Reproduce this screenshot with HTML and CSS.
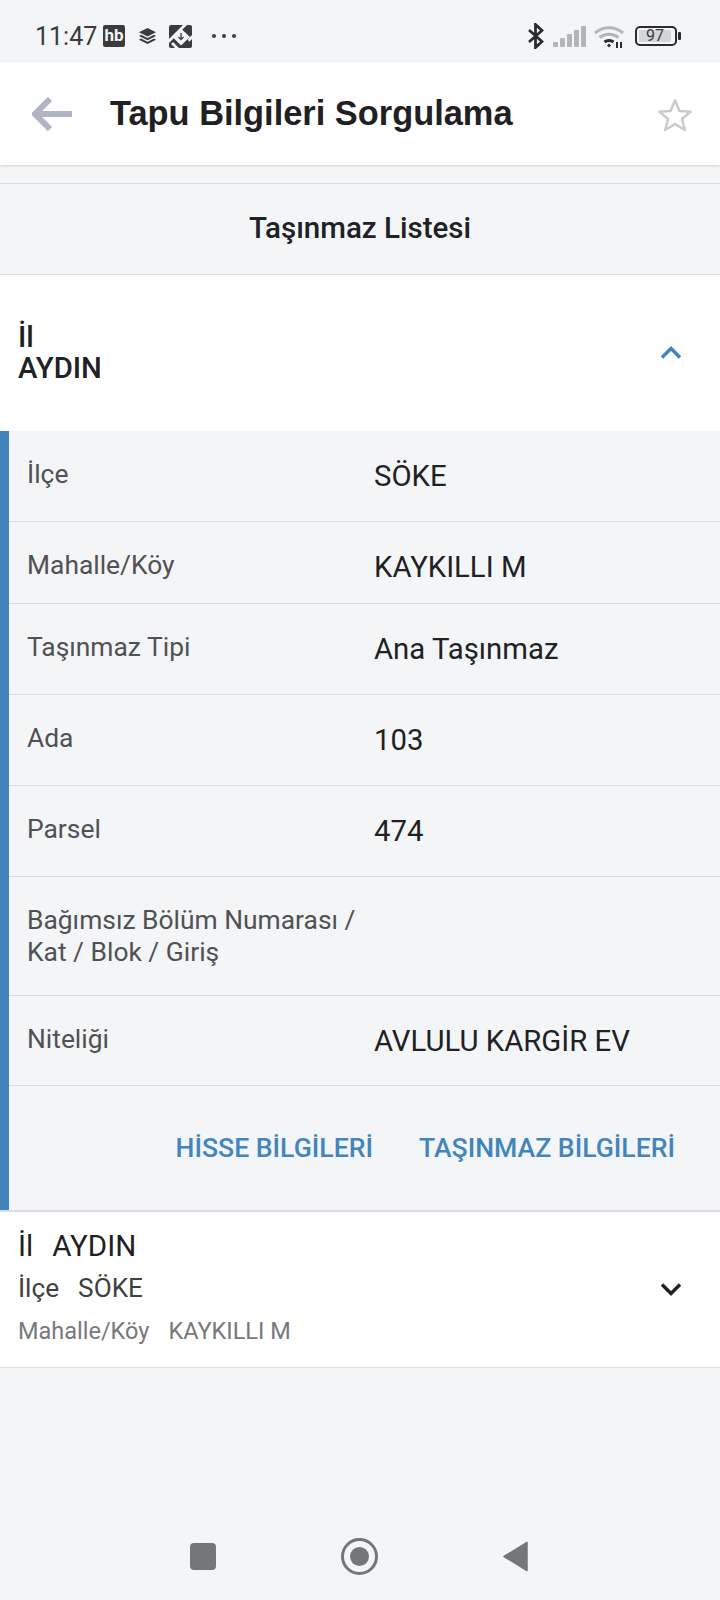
FILE: index.html
```html
<!DOCTYPE html>
<html lang="tr">
<head>
  <meta charset="UTF-8" />
  <meta name="viewport" content="width=device-width, initial-scale=1.0" />
  <title>Tapu Bilgileri Sorgulama</title>
  <link rel="stylesheet" href="styles.css">
</head>
<body>
  <div class="status-bar">
    <span class="time">11:47</span>
    <span class="hb">hb</span>
    <svg class="ic-layers" viewBox="0 0 17 16"><path d="M8.500 0 17 4.200 8.500 8.400 0 4.200z" fill="#3a3b3d"/><path d="M2 6.800 8.500 10 15 6.800 17 8 8.500 12.200 0 8z" fill="#3a3b3d"/><path d="M2 10.600 8.500 13.800 15 10.600 17 11.800 8.500 16 0 11.800z" fill="#3a3b3d"/></svg>
    <svg class="ic-app" viewBox="0 0 23 23"><rect width="23" height="23" rx="2" fill="#3a3b3d"/><path d="M0 14 14 0H18L0 18z" fill="#f4f5f7"/><path d="M12 3.500 21 12 12 20.500 3.500 12z" fill="#f4f5f7"/><path d="M4 17 10 23H6L2 19z" fill="#f4f5f7"/><path d="M19 14 23 10V14L20 17z" fill="#f4f5f7"/><path d="M12 8v6.500M9.500 12l2.500 2.500 2.500-2.500" stroke="#3a3b3d" stroke-width="1.300" fill="none"/></svg>
    <span class="dots"><i></i><i></i><i></i></span>
    <span class="status-right">
      <svg class="ic-bt" viewBox="0 0 16 26"><path d="M1 7 14 18.500 7.500 24.500V1.500L14 7.500 1 19" fill="none" stroke="#2b2c2e" stroke-width="2.800"/></svg>
      <svg class="ic-signal" viewBox="0 0 33 21"><rect x="0" y="16" width="5" height="5" rx="1" fill="#b4b5b7"/><rect x="7" y="12" width="5" height="9" rx="1" fill="#b4b5b7"/><rect x="14" y="8" width="5" height="13" rx="1" fill="#b4b5b7"/><rect x="21" y="4" width="5" height="17" rx="1" fill="#b4b5b7"/><rect x="28" y="0" width="5" height="21" rx="1" fill="#b4b5b7"/></svg>
      <svg class="ic-wifi" viewBox="0 0 30 23"><path d="M1 8C9 1 21 1 29 8" fill="none" stroke="#b4b5b7" stroke-width="3"/><path d="M5.500 12.500C11 8 19 8 24.500 12.500" fill="none" stroke="#b4b5b7" stroke-width="3"/><path d="M10.500 17C13 15 17 15 19.500 17" fill="none" stroke="#2b2c2e" stroke-width="3"/><path d="M13 20.500 15 18.500 17 20.500 15 22.500z" fill="#2b2c2e"/><path d="M23 17v6M27 17v6" stroke="#2b2c2e" stroke-width="2"/></svg>
      <span class="battery"><span class="battery-fill">97</span></span>
    </span>
  </div>

  <header class="app-bar">
    <svg class="ic-back" viewBox="0 0 40 34"><path d="M18 2 3 17 18 32M3 17H40" fill="none" stroke="#b1b4c3" stroke-width="6"/></svg>
    <h1>Tapu Bilgileri Sorgulama</h1>
    <svg class="ic-star" viewBox="0 0 36 34"><path d="M18 2.500 22.500 13 33.500 13.800 25 21 27.800 32 18 26 8.200 32 11 21 2.500 13.800 13.500 13z" fill="none" stroke="#c9cacd" stroke-width="2.500" stroke-linejoin="round"/></svg>
  </header>

  <div class="list-title">Taşınmaz Listesi</div>

  <section class="panel-head">
    <div class="panel-name">
      <div>İl</div>
      <div>AYDIN</div>
    </div>
    <svg class="ic-chevron" viewBox="0 0 22 13"><path d="M2 11.500 11 2.500 20 11.500" fill="none" stroke="#4285bd" stroke-width="3.400"/></svg>
  </section>

  <section class="detail">
    <div class="row"><span class="label">İlçe</span><span class="value">SÖKE</span></div>
    <div class="row row-short"><span class="label">Mahalle/Köy</span><span class="value">KAYKILLI M</span></div>
    <div class="row"><span class="label">Taşınmaz Tipi</span><span class="value">Ana Taşınmaz</span></div>
    <div class="row"><span class="label">Ada</span><span class="value">103</span></div>
    <div class="row"><span class="label">Parsel</span><span class="value">474</span></div>
    <div class="row row-tall"><span class="label">Bağımsız Bölüm Numarası / Kat / Blok / Giriş</span><span class="value"></span></div>
    <div class="row row-last"><span class="label">Niteliği</span><span class="value">AVLULU KARGİR EV</span></div>
    <div class="actions">
      <a>HİSSE BİLGİLERİ</a>
      <a>TAŞINMAZ BİLGİLERİ</a>
    </div>
  </section>

  <section class="item">
    <div class="item-text">
      <div class="item-il">İl<span>AYDIN</span></div>
      <div class="item-ilce">İlçe<span>SÖKE</span></div>
      <div class="item-mah">Mahalle/Köy<span>KAYKILLI M</span></div>
    </div>
    <svg class="ic-chevron" viewBox="0 0 22 13"><path d="M2 1.500 11 10.500 20 1.500" fill="none" stroke="#202124" stroke-width="3.400"/></svg>
  </section>

  <nav class="nav-bar">
    <span class="nav-square"></span>
    <span class="nav-circle"><i></i></span>
    <svg class="nav-back" viewBox="0 0 25 31"><path d="M24 1.500V29.500L1 15.500z" fill="#757678" stroke="#757678" stroke-width="1.500" stroke-linejoin="round"/></svg>
  </nav>
</body>
</html>
```

FILE: styles.css
```css
* { margin: 0; padding: 0; box-sizing: border-box; }
html { font-size: 16px; }
body {
  width: 720px;
  height: 1600px;
  display: flex;
  flex-direction: column;
  font-family: 'Roboto', sans-serif;
  color: #202124;
  background: #f4f5f7;
  overflow: hidden;
}
svg { display: block; flex: none; }

/* Status bar */
.status-bar {
  height: 62px;
  display: flex;
  align-items: center;
  padding: 10px 43px 0 35px;
  color: #3a3b3d;
}
.time { font-size: 25px; width: 68px; }
.hb {
  width: 22px;
  height: 22px;
  border-radius: 2px;
  background: #3a3b3d;
  color: #f4f5f7;
  font-size: 17px;
  font-weight: 700;
  line-height: 21px;
  text-align: center;
}
.ic-layers { width: 17px; height: 16px; margin-left: 14px; }
.ic-app { width: 23px; height: 23px; margin-left: 13px; }
.dots { display: flex; gap: 6px; margin-left: 20px; }
.dots i { width: 4px; height: 4px; border-radius: 50%; background: #3a3b3d; }
.status-right { display: flex; align-items: center; margin-left: auto; }
.ic-bt { width: 16px; height: 26px; }
.ic-signal { width: 33px; height: 21px; margin-left: 9px; }
.ic-wifi { width: 30px; height: 23px; margin-left: 8px; }
.battery {
  position: relative;
  width: 42px;
  height: 20px;
  margin-left: 11px;
  border: 2px solid #2b2c2e;
  border-radius: 5px;
  padding: 2px 4px 2px 2px;
}
.battery::after {
  content: '';
  position: absolute;
  right: -6px;
  top: 4px;
  width: 3px;
  height: 8px;
  border-radius: 1px;
  background: #2b2c2e;
}
.battery-fill {
  display: block;
  height: 12px;
  background: #d4d5d7;
  border-radius: 1px;
  font-size: 16px;
  line-height: 12px;
  text-align: center;
  color: #3a3b3d;
}

/* App bar */
.app-bar {
  height: 103px;
  display: flex;
  align-items: center;
  padding: 0 27px 0 32px;
  background: #fff;
  box-shadow: 0 1px 3px rgba(0,0,0,0.14);
}
.ic-back { width: 40px; height: 34px; margin-top: 1px; }
.app-bar h1 {
  margin-left: 38px;
  font-family: 'Liberation Sans', sans-serif;
  font-size: 34.4px;
  font-weight: 700;
  color: #1f2022;
}
.ic-star { width: 36px; height: 34px; margin-left: auto; margin-top: 2px; }

/* List title */
.list-title {
  margin-top: 18px;
  height: 92px;
  display: flex;
  align-items: center;
  justify-content: center;
  padding-bottom: 2px;
  border-top: 1px solid #dcdde0;
  border-bottom: 1px solid #dcdde0;
  font-size: 29.5px;
  font-weight: 500;
}

/* Open panel */
.panel-head {
  height: 156px;
  display: flex;
  align-items: center;
  justify-content: space-between;
  padding: 0 38px 0 18px;
  background: #fff;
}
.panel-name { font-size: 29.3px; font-weight: 500; line-height: 31px; padding-bottom: 1px; }
.ic-chevron { width: 22px; height: 13px; }
.panel-head .ic-chevron { margin-bottom: 2px; }
.detail { border-left: 9px solid #4285bd; }
.row {
  display: flex;
  height: 91px;
  padding: 27px 0 0 18px;
  border-bottom: 1px solid #dcdde0;
}
.row-short { height: 82px; }
.row-tall { height: 119px; }
.row-last { height: 90px; }
.label {
  width: 347px;
  flex: none;
  padding-right: 10px;
  font-size: 26.4px;
  line-height: 32px;
  color: #505154;
}
.value { font-size: 29.3px; line-height: 36px; color: #202124; }
.actions {
  height: 124px;
  display: flex;
  align-items: center;
  justify-content: flex-end;
  gap: 46px;
  padding: 0 45px 2px 0;
}
.actions a { font-size: 26.6px; font-weight: 500; color: #4285bd; }

/* Collapsed item */
.item {
  height: 158px;
  display: flex;
  align-items: center;
  justify-content: space-between;
  padding: 0 38px 0 18px;
  background: #fff;
  border-top: 2px solid #dcdde0;
  border-bottom: 1px solid #dcdde0;
}
.item-text span { margin-left: 19px; }
.item-il { font-size: 29.5px; line-height: 36px; color: #202124; }
.item-ilce { font-size: 26.2px; line-height: 48px; color: #3f4043; }
.item-mah { font-size: 23.5px; line-height: 39px; color: #77787b; }

/* System navigation */
.nav-bar {
  margin-top: auto;
  height: 88px;
  display: flex;
  align-items: center;
  padding: 0 192px 0 190px;
  justify-content: space-between;
}
.nav-square { width: 26px; height: 27px; border-radius: 4px; background: #757678; }
.nav-circle {
  width: 37px;
  height: 37px;
  border: 3px solid #757678;
  border-radius: 50%;
  display: flex;
  align-items: center;
  justify-content: center;
}
.nav-circle i { width: 19px; height: 19px; border-radius: 50%; background: #757678; }
.nav-back { width: 25px; height: 31px; }
```
